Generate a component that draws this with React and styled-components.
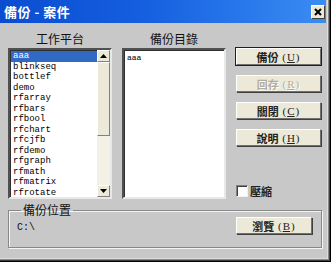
import React from 'react'
import styled, { createGlobalStyle } from 'styled-components'

const GlobalStyle = createGlobalStyle`
  html, body {
    margin: 0;
    padding: 0;
    background: #c8c8c8;
  }
`;

const cjk = `"Noto Sans CJK TC", "Noto Sans", sans-serif`;

const Window = styled.div`
  width: 331px;
  height: 262px;
  box-sizing: border-box;
  padding: 0 5px 4px 0;
  display: flex;
  flex-flow: column;
  background: #c8c8c8;
  box-shadow: inset -1px -1px #000, inset -2px -2px #404040, inset -3px -3px #888, inset -4px -4px #dcdcdc;
  overflow: hidden;
`;

const TitleBar = styled.div`
  height: 23px;
  flex: none;
  display: flex;
  align-items: center;
  justify-content: space-between;
  padding: 0 1px 0 4px;
  background: linear-gradient(to right, #0a4cd0 0%, #1560e0 45%, #3a8cf4 100%);
`;

const Title = styled.span`
  color: #fff;
  font-family: ${cjk};
  font-weight: 700;
  font-size: 13px;
  letter-spacing: 0.5px;
`;

const CloseButton = styled.div`
  width: 14px;
  height: 14px;
  box-sizing: border-box;
  background: #ece9d8;
  border: 1px solid;
  border-color: #fff #404040 #404040 #fff;
  display: flex;
  align-items: center;
  justify-content: center;
`;

const Body = styled.div`
  flex: 1;
  display: flex;
  flex-flow: column;
  padding: 9px 0 0 8px;
`;

const Top = styled.div`
  display: flex;
  flex-flow: row;
  height: 167px;
`;

const Column = styled.div`
  width: ${p => p.$w}px;
  margin-right: ${p => p.$gap || 0}px;
  display: flex;
  flex-flow: column;
`;

const Label = styled.div`
  height: 14px;
  line-height: 14px;
  margin-bottom: 2px;
  text-align: center;
  font-family: ${cjk};
  font-size: 12px;
  color: #111;
`;

const ListBox = styled.div`
  flex: 1;
  box-sizing: border-box;
  background: #fff;
  border: 2px solid;
  border-color: #505050 #e8e8e8 #e8e8e8 #505050;
  box-shadow: inset 1px 1px #303030;
  display: flex;
  flex-flow: row;
  overflow: hidden;
`;

const Items = styled.div`
  flex: 1;
  padding: 1px 0 0 1px;
`;

const Item = styled.div`
  height: 10.5px;
  line-height: 10.5px;
  padding-left: 2px;
  font-family: "Liberation Mono", monospace;
  font-size: 9px;
  color: ${p => (p.$sel ? '#fff' : '#000')};
  background: ${p => (p.$sel ? '#316ac5' : 'transparent')};
  white-space: nowrap;
`;

const SmallItem = styled.div`
  padding: 3px 0 0 3px;
  font-family: "Liberation Mono", monospace;
  font-size: 8px;
  color: #000;
`;

const ScrollBar = styled.div`
  width: 13px;
  display: flex;
  flex-flow: column;
  background: #f3f1e6;
`;

const ScrollBtn = styled.div`
  height: 12px;
  box-sizing: border-box;
  background: #ece9d8;
  border: 1px solid;
  border-color: #fff #808080 #808080 #fff;
  display: flex;
  align-items: center;
  justify-content: center;
`;

const Thumb = styled.div`
  height: 74px;
  box-sizing: border-box;
  background: #ece9d8;
  border: 1px solid;
  border-color: #fff #808080 #808080 #fff;
`;

const Track = styled.div`
  flex: 1;
`;

const ButtonCol = styled.div`
  width: 85px;
  padding-top: 16px;
  display: flex;
  flex-flow: column;
  gap: 10px;
`;

const Button = styled.div`
  height: 17px;
  box-sizing: border-box;
  display: flex;
  align-items: center;
  justify-content: center;
  background: #ece9d8;
  border: 1px solid;
  border-color: #fff #707070 #707070 #fff;
  box-shadow: ${p => (p.$default ? '0 0 0 1px #202020' : '1px 1px #404040')};
  font-family: ${cjk};
  font-size: 11px;
  font-weight: 700;
  color: ${p => (p.$disabled ? '#b0ada0' : '#222')};
  text-shadow: ${p => (p.$disabled ? '1px 1px #fff' : 'none')};
  white-space: pre;
  width: ${p => p.$w || 'auto'};
`;

const Key = styled.span`
  font-family: "Liberation Serif", serif;
  font-weight: 400;
  text-decoration: underline;
`;

const Paren = styled.span`
  font-family: "Liberation Serif", serif;
  font-weight: 400;
  margin: 0 1px;
`;

const CheckRow = styled.label`
  margin-top: auto;
  display: flex;
  align-items: center;
  gap: 2px;
  font-family: ${cjk};
  font-size: 11px;
  font-weight: 700;
  color: #222;
`;

const CheckBox = styled.span`
  width: 12px;
  height: 12px;
  box-sizing: border-box;
  background: #fff;
  border: 1px solid;
  border-color: #808080 #f0f0f0 #f0f0f0 #808080;
  box-shadow: inset 1px 1px #404040;
`;

const Group = styled.fieldset`
  margin: 4px 0 0;
  width: 314px;
  height: 45px;
  box-sizing: border-box;
  padding: 0 9px 0 8px;
  border: 1px solid #888;
  box-shadow: inset 1px 1px #f4f4f4, 1px 1px #f4f4f4;
  display: flex;
  align-items: center;
  justify-content: space-between;
`;

const Legend = styled.legend`
  padding: 0 2px;
  margin-left: 4px;
  font-family: ${cjk};
  font-size: 12px;
  line-height: 14px;
  color: #111;
`;

const Path = styled.span`
  font-family: "Liberation Mono", monospace;
  font-size: 10px;
  color: #111;
  margin-top: 4px;
`;

function BtnText({ label, k }) {
  return (
    <>
      {label}
      <Paren>{' ('}</Paren>
      <Key>{k}</Key>
      <Paren>)</Paren>
    </>
  )
}

function App() {
  const items = ['aaa', 'blinkseq', 'bottlef', 'demo', 'rfarray', 'rfbars', 'rfbool',
    'rfchart', 'rfcjfb', 'rfdemo', 'rfgraph', 'rfmath', 'rfmatrix', 'rfrotate']

  return (
    <Window>
      <GlobalStyle />
      <TitleBar>
        <Title>備份 - 案件</Title>
        <CloseButton>
          <svg width="8" height="8" viewBox="0 0 8 8">
            <path d="M1 1L7 7M7 1L1 7" stroke="#000" strokeWidth="2" />
          </svg>
        </CloseButton>
      </TitleBar>
      <Body>
        <Top>
          <Column $w={104} $gap={10}>
            <Label>工作平台</Label>
            <ListBox>
              <Items>
                {items.map((it, i) => <Item key={it} $sel={i === 0}>{it}</Item>)}
              </Items>
              <ScrollBar>
                <ScrollBtn>
                  <svg width="7" height="4" viewBox="0 0 7 4"><path d="M3.5 0L7 4H0Z" fill="#000" /></svg>
                </ScrollBtn>
                <Thumb />
                <Track />
                <ScrollBtn>
                  <svg width="7" height="4" viewBox="0 0 7 4"><path d="M0 0H7L3.5 4Z" fill="#000" /></svg>
                </ScrollBtn>
              </ScrollBar>
            </ListBox>
          </Column>
          <Column $w={104} $gap={10}>
            <Label>備份目錄</Label>
            <ListBox>
              <SmallItem>aaa</SmallItem>
            </ListBox>
          </Column>
          <ButtonCol>
            <Button $default><BtnText label="備份" k="U" /></Button>
            <Button $disabled><BtnText label="回存" k="R" /></Button>
            <Button><BtnText label="關閉" k="C" /></Button>
            <Button><BtnText label="說明" k="H" /></Button>
            <CheckRow>
              <CheckBox />
              壓縮
            </CheckRow>
          </ButtonCol>
        </Top>
        <Group>
          <Legend>備份位置</Legend>
          <Path>C:\</Path>
          <Button $w="76px"><BtnText label="瀏覽" k="B" /></Button>
        </Group>
      </Body>
    </Window>
  )
}

export default App
